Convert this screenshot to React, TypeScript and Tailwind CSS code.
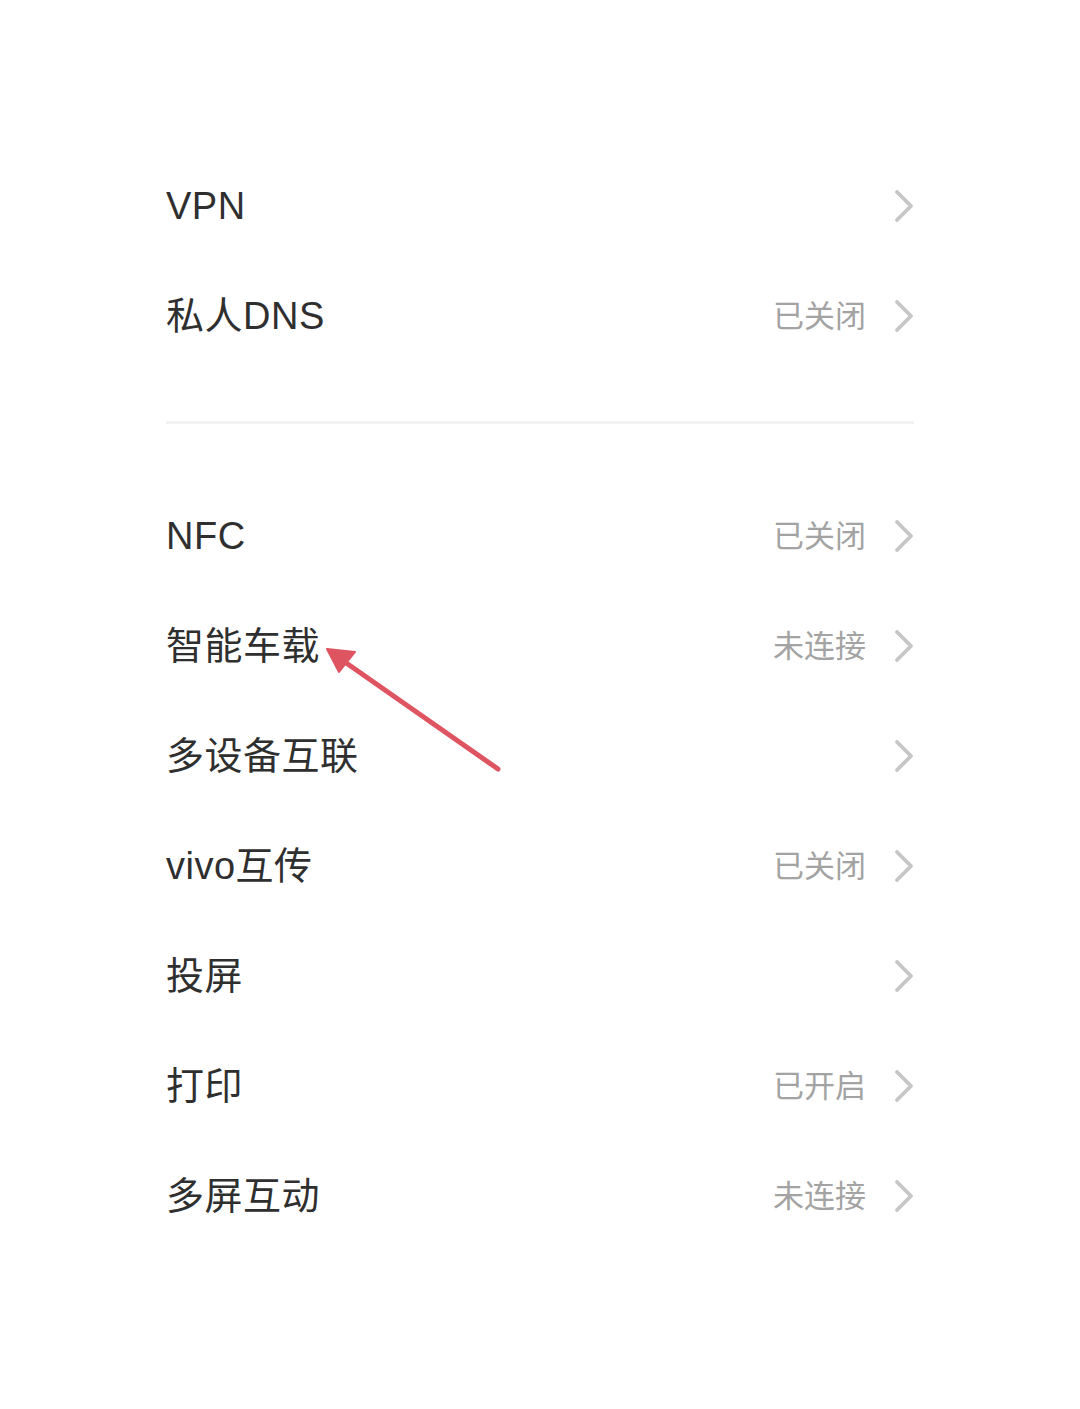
import React from 'react';

type Row = { title: string; status?: string };

const topRows: Row[] = [{ title: 'VPN' }, { title: '私人DNS', status: '已关闭' }];

const bottomRows: Row[] = [
  { title: 'NFC', status: '已关闭' },
  { title: '智能车载', status: '未连接' },
  { title: '多设备互联' },
  { title: 'vivo互传', status: '已关闭' },
  { title: '投屏' },
  { title: '打印', status: '已开启' },
  { title: '多屏互动', status: '未连接' },
];

const Chevron = () => (
  <svg width="20" height="32" viewBox="0 0 20 32" fill="none" className="shrink-0">
    <polyline
      points="3,2 17,16 3,30"
      stroke="#c6c6c6"
      strokeWidth="3.8"
      strokeLinecap="round"
      strokeLinejoin="round"
    />
  </svg>
);

const SettingRow = ({ title, status }: Row) => (
  <div className="flex h-[110px] items-center justify-between">
    <span className="text-[38px] leading-none tracking-[0.5px] text-[#2f2f2f]">{title}</span>
    <div className="flex items-center gap-[28px]">
      {status && <span className="text-[31px] leading-none text-[#a3a3a3]">{status}</span>}
      <Chevron />
    </div>
  </div>
);

export default function App() {
  return (
    <div
      className="relative min-h-[1409px] w-[1080px] bg-white px-[166px] pt-[151px]"
      style={{ fontFamily: '"Liberation Sans", "Noto Sans CJK SC", sans-serif' }}
    >
      <div>
        {topRows.map((r) => (
          <SettingRow key={r.title} {...r} />
        ))}
      </div>

      <div className="mt-[50px] mb-[57px] h-[3px] bg-[#f2f2f2]" />

      <div>
        {bottomRows.map((r) => (
          <SettingRow key={r.title} {...r} />
        ))}
      </div>

      {/* red annotation arrow pointing at 智能车载 */}
      <svg
        className="pointer-events-none absolute left-0 top-0"
        width="1080"
        height="1409"
        viewBox="0 0 1080 1409"
      >
        <line x1="498" y1="769" x2="342" y2="660" stroke="#de5561" strokeWidth="5" strokeLinecap="round" />
        <polygon points="327,649 355,652 339,672" fill="#de5561" stroke="#de5561" strokeWidth="2" strokeLinejoin="round" />
      </svg>
    </div>
  );
}
